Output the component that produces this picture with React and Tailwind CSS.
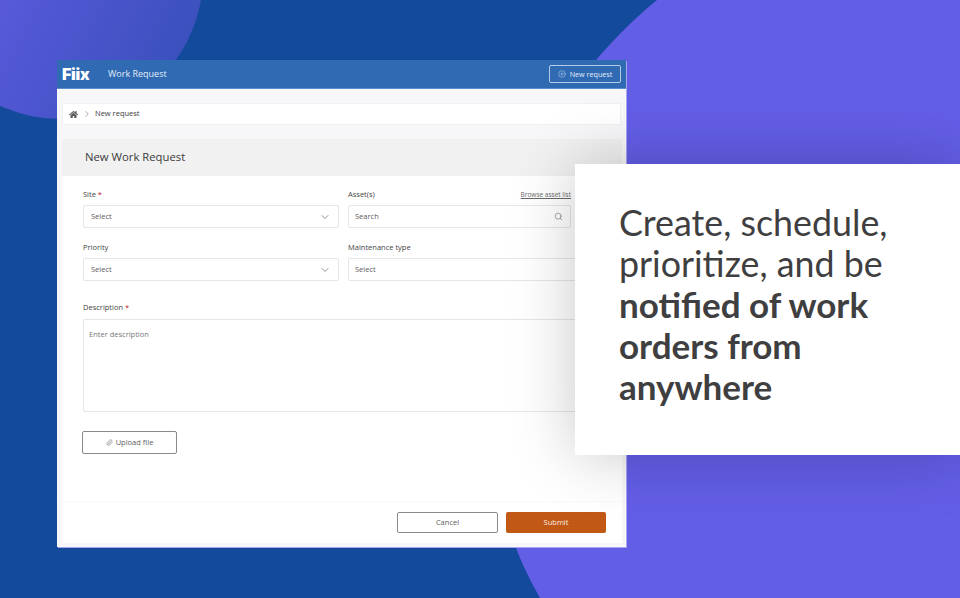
import React from 'react';
import { ChevronDown, ChevronRight, CirclePlus, Paperclip, Search } from 'lucide-react';
import { FaHome } from 'react-icons/fa';

const labelClass = 'text-[7.5px] leading-[11px] font-medium text-[#454545]';
const inputClass = 'flex h-[23px] items-center justify-between rounded-[2px] border border-[#e6e6e6] bg-white pr-[7px] text-[7.5px] text-[#5c5c5c]';

const Required = () => <span className="text-[#c8102e]"> *</span>;

const Backdrop = () => (
	<svg className="absolute inset-0" width="960" height="598" viewBox="0 0 960 598">
		<defs>
			<linearGradient id="blob" x1="0" y1="0.2" x2="1" y2="0.7">
				<stop offset="0" stopColor="#6a5fec" />
				<stop offset="1" stopColor="#3a50bc" />
			</linearGradient>
		</defs>
		<circle cx="60" cy="-24" r="143" fill="url(#blob)" />
		<path d="M657 0 C 625 26 596 58 570 92 C 500 190 478 330 503 500 C 508 535 524 570 540 598 L960 598 L960 0 Z" fill="#635ee6" />
	</svg>
);

const WorkRequestWindow = () => (
	<div className="relative flex h-[487px] w-[569px] flex-col bg-[#f7f7fa] font-['Open_Sans',sans-serif] shadow-[1px_1px_0_#a9a5f0]">
		<header className="flex h-[29px] shrink-0 items-center justify-between border-b border-[#5b8ccb] bg-[#2f6ab3] pl-[5px] pr-[5px]">
			<div className="flex items-center">
				<span className="w-[46px] font-['Inter',sans-serif] text-[16px] leading-none font-black tracking-[-0.3px] text-white">Fiix</span>
				<span className="text-[9px] font-medium text-[#e4edf8]">Work Request</span>
			</div>
			<button type="button" className="flex h-[18px] w-[72px] items-center justify-center gap-[4px] rounded-[2px] border border-[#b5cbe6] text-[7.2px] font-medium text-[#e4edf8]">
				<CirclePlus size={8} strokeWidth={1.3} />
				New request
			</button>
		</header>

		<nav className="mr-[5px] ml-[5px] mt-[14px] flex h-[22px] items-center gap-[3px] border border-[#f0f0f2] bg-white pl-[6px]">
			<FaHome size={9} className="text-[#5a5a5a]" />
			<ChevronRight size={10} strokeWidth={1.2} className="ml-[1px] text-[#5a5a5a]" />
			<span className="text-[7.5px] font-medium text-[#3c3c3c]">New request</span>
		</nav>

		<div className="mr-[4px] ml-[5px] mt-[14px] flex min-h-0 flex-1 flex-col bg-white">
			<div className="flex h-[37px] shrink-0 items-center bg-[#f1f1f1] pl-[23px] text-[11.3px] font-medium text-[#3a3a3a]">New Work Request</div>

			<div className="flex-1 pt-[13px] pl-[21px]">
				<div className="grid w-[488px] grid-cols-[256px_223px] gap-x-[9px]">
					<div>
						<div className={labelClass}>Site<Required /></div>
						<div className={`${inputClass} mt-[5px] pl-[7px]`}>Select<ChevronDown size={12} strokeWidth={1.3} className="text-[#555]" /></div>
					</div>
					<div>
						<div className="flex items-center justify-between">
							<span className={labelClass}>Asset(s)</span>
							<span className="text-[6.5px] leading-[11px] text-[#6a6a6a] underline">Browse asset list</span>
						</div>
						<div className={`${inputClass} mt-[5px] pl-[6px]`}>Search<Search size={9} strokeWidth={1.3} className="text-[#555]" /></div>
					</div>
					<div className="mt-[14px]">
						<div className={labelClass}>Priority</div>
						<div className={`${inputClass} mt-[5px] pl-[7px]`}>Select<ChevronDown size={12} strokeWidth={1.3} className="text-[#555]" /></div>
					</div>
					<div className="mt-[14px]">
						<div className={labelClass}>Maintenance type</div>
						<div className={`${inputClass} mt-[5px] w-[240px] pl-[6px]`}>Select</div>
					</div>
				</div>

				<div className={`${labelClass} mt-[21px]`}>Description<Required /></div>
				<div className="mt-[6px] h-[93px] w-[510px] rounded-[2px] border border-[#e6e6e6] pt-[9px] pl-[5px] text-[7.5px] text-[#777]">Enter description</div>

				<button type="button" className="mt-[19px] -ml-px flex h-[23px] w-[95px] items-center justify-center gap-[3px] rounded-[2px] border border-[#8a8a8a] text-[7.5px] text-[#5c5c5c]">
					<Paperclip size={7} strokeWidth={1.5} />
					Upload file
				</button>
			</div>

			<footer className="flex h-[42px] shrink-0 items-center justify-end gap-[8px] border-t border-[#f8f8f8] pr-[16px]">
				<button type="button" className="h-[21px] w-[101px] rounded-[2px] border border-[#8a8a8a] bg-white text-[7.5px] text-[#5c5c5c]">Cancel</button>
				<button type="button" className="h-[21px] w-[100px] rounded-[2px] bg-[#c25816] text-[7.5px] font-medium text-[#fbeee4]">Submit</button>
			</footer>
		</div>
		<div className="h-[4px] shrink-0" />
	</div>
);

const App = () => (
	<div className="relative h-[598px] w-[960px] overflow-hidden bg-[#134a9b]">
		<Backdrop />
		<div className="relative pt-[60px] pl-[57px]">
			<WorkRequestWindow />
		</div>
		<aside className="absolute top-[164px] left-[575px] h-[291px] w-[385px] bg-white pt-[39px] pl-[44px] font-['Lato',sans-serif] text-[35px] leading-[40.7px] text-[#3f3f41] shadow-[0_0_60px_rgba(0,0,0,0.22)]">
			<p className="text-[35.8px] font-normal">Create, schedule,</p>
			<p className="text-[35.8px] font-normal">prioritize, and be</p>
			<p className="font-bold">notified of work</p>
			<p className="font-bold">orders from</p>
			<p className="font-bold">anywhere</p>
		</aside>
	</div>
);

export default App;
